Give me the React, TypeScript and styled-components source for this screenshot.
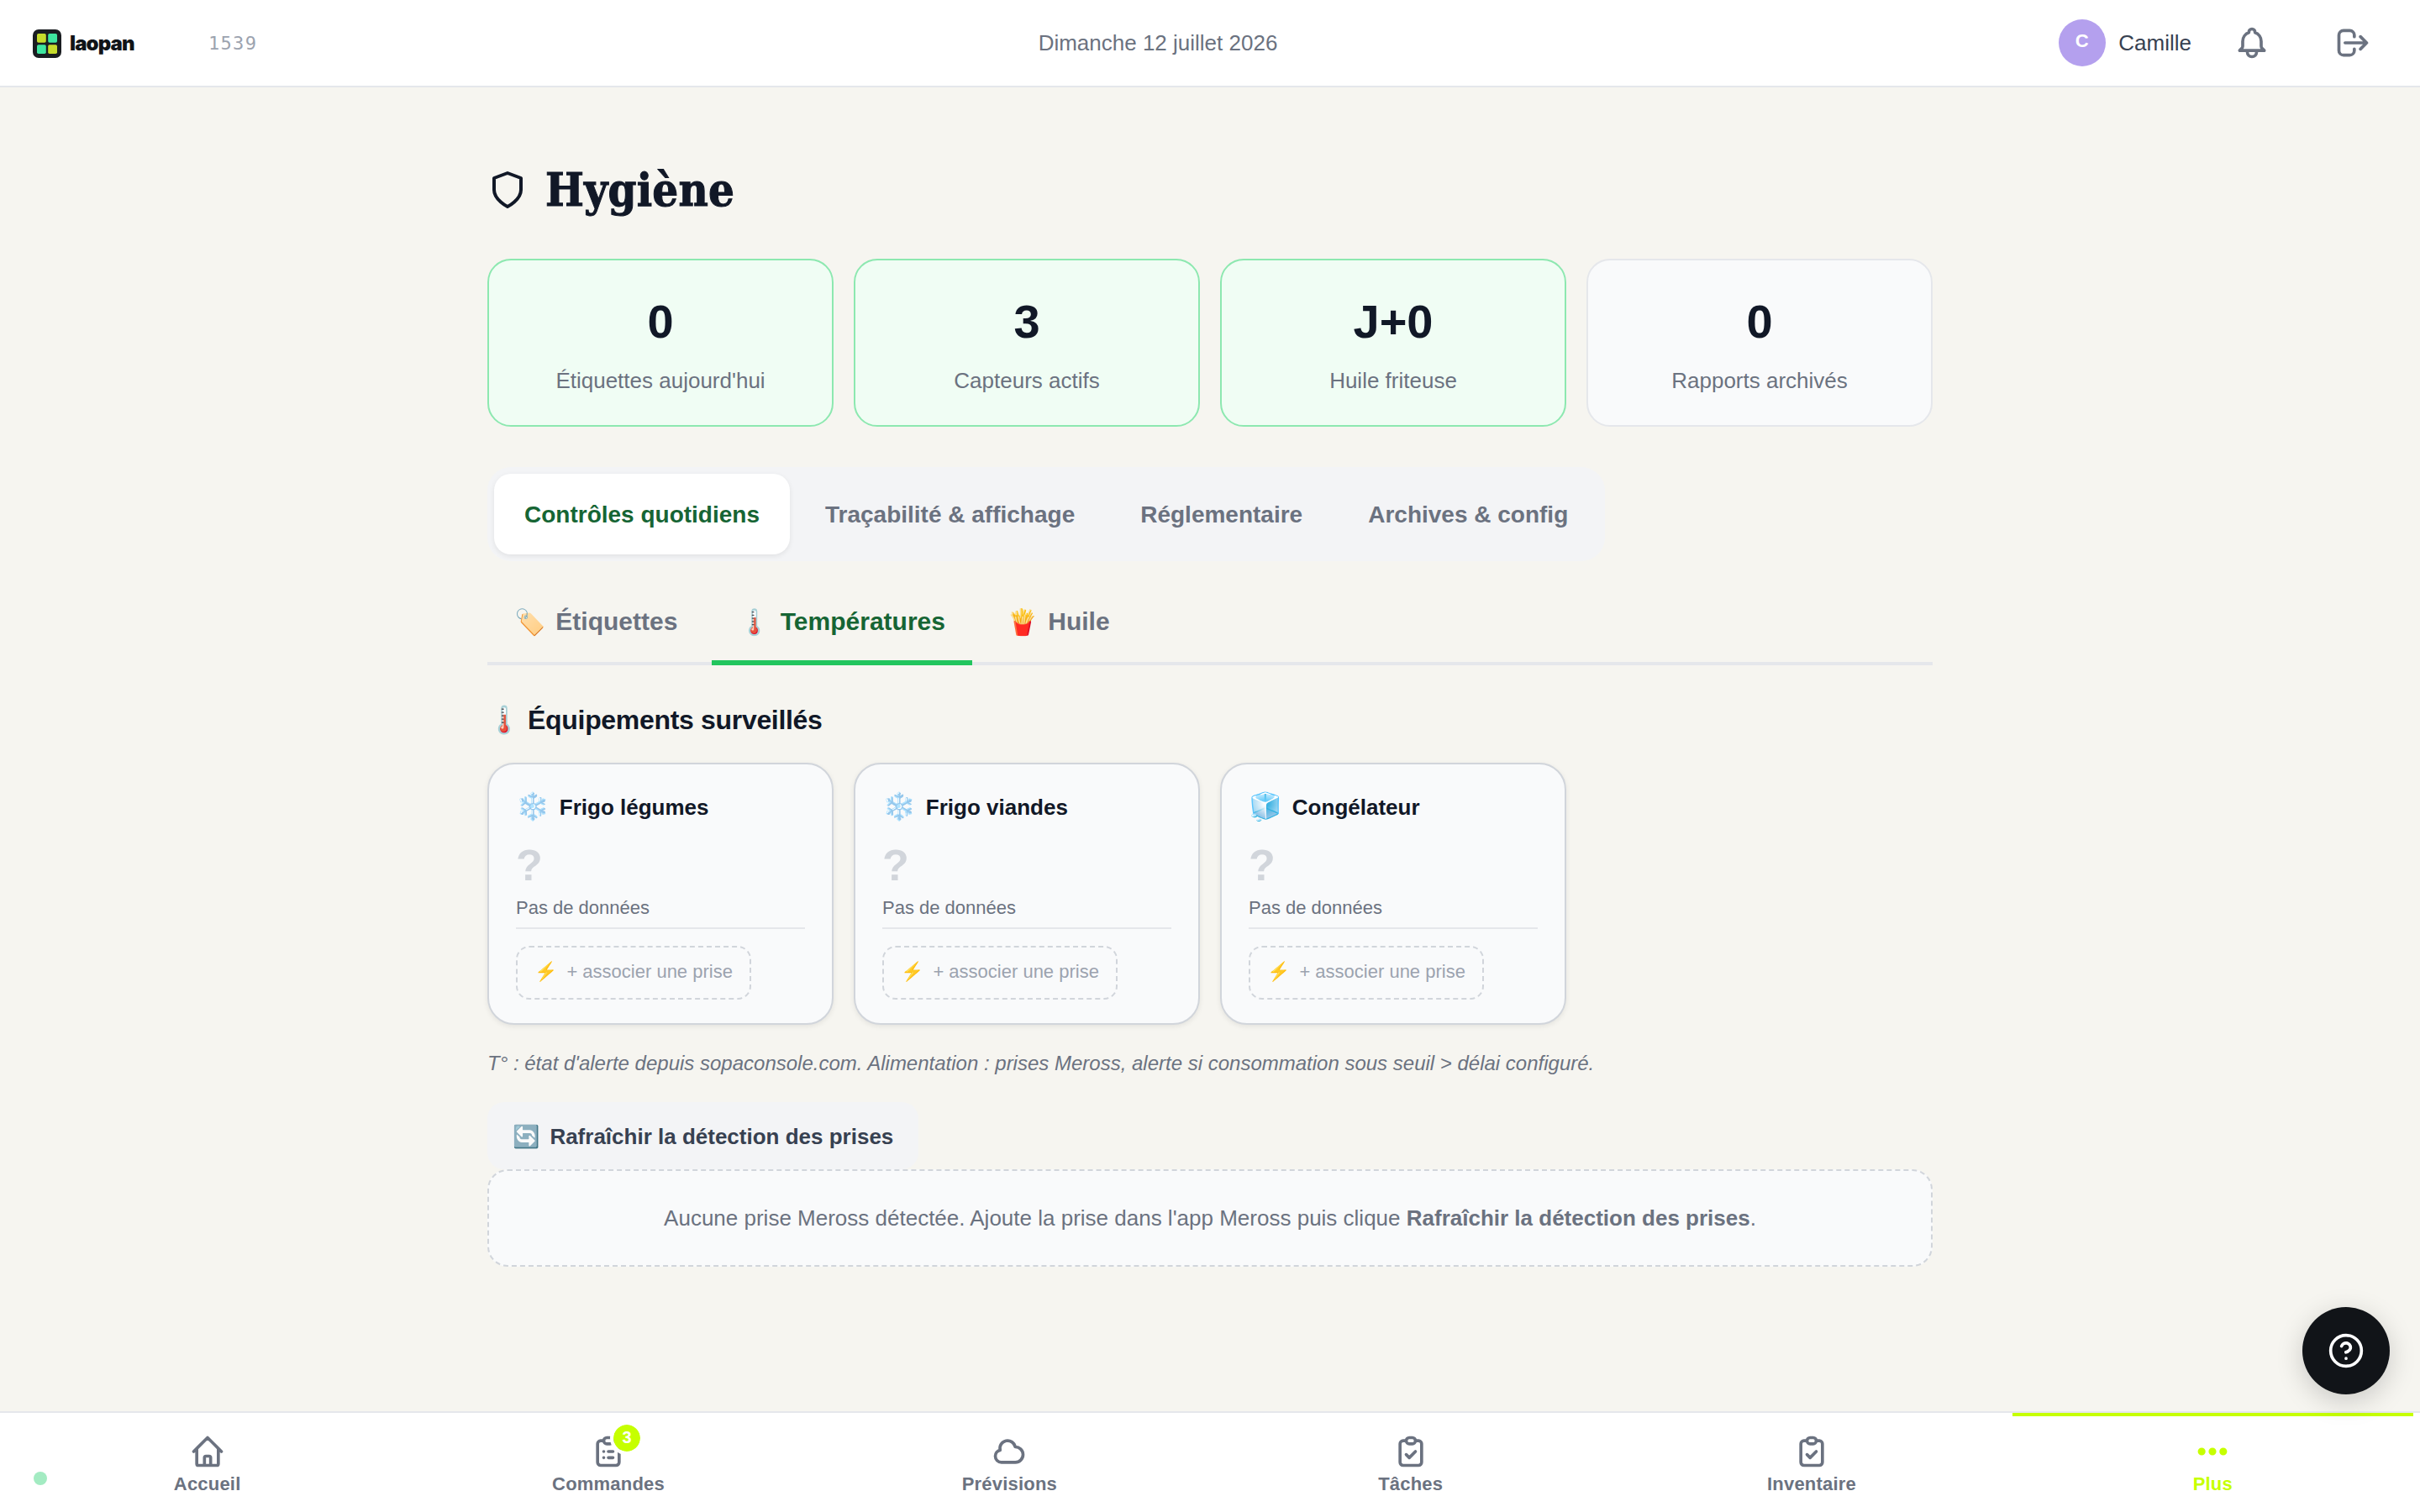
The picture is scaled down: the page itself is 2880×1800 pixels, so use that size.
import React from "react";
import styled, { createGlobalStyle } from "styled-components";

const sans = `"Liberation Sans", Arial, "Noto Color Emoji", sans-serif`;

const GlobalStyle = createGlobalStyle`
  * { box-sizing: border-box; }
  body { margin: 0; background: #f6f5f0; font-family: ${sans}; color: #111827; }
  button { font-family: inherit; border: 0; background: none; padding: 0; margin: 0; }
  svg { display: block; flex: none; }
`;

const Page = styled.div`
  position: relative;
  height: 1800px;
  display: flex;
  flex-direction: column;
  overflow: hidden;
`;

const Header = styled.header`
  height: 104px;
  flex: none;
  display: grid;
  grid-template-columns: 1fr auto 1fr;
  align-items: center;
  background: #fff;
  border-bottom: 2px solid #e5e7eb;
  padding: 0 36px 0 38px;
`;

const Brand = styled.div`
  display: flex;
  align-items: center;
`;

const BrandName = styled.span`
  font-family: Inter, sans-serif;
  font-weight: 900;
  font-size: 24px;
  line-height: 34px;
  letter-spacing: -0.9px;
  color: #111418;
  margin-left: 9px;
  margin-top: 1px;
  width: 165px;
`;

const Code = styled.span`
  font-family: "DejaVu Sans Mono", monospace;
  font-size: 22px;
  letter-spacing: 1.3px;
  color: #9ca3af;
`;

const Today = styled.div`
  font-size: 26px;
  color: #6b7280;
  margin-right: 126px;
`;

const Account = styled.div`
  display: flex;
  align-items: center;
  justify-content: flex-end;
`;

const Avatar = styled.div`
  width: 56px;
  height: 56px;
  border-radius: 50%;
  background: #b4a0ee;
  color: #fff;
  font-weight: 700;
  font-size: 22px;
  line-height: 51px;
  padding-right: 1px;
  text-align: center;
`;

const UserName = styled.span`
  font-size: 26px;
  color: #374151;
  margin-left: 15px;
`;

const IconButton = styled.button<{ $gap: number }>`
  width: 88px;
  height: 88px;
  display: flex;
  align-items: center;
  justify-content: center;
  color: #6b7280;
  margin-left: ${(p) => p.$gap}px;
`;

const Main = styled.main`
  width: 1720px;
  margin: 0 auto;
  padding-top: 80px;
  flex: 1;
  min-height: 0;
  display: flex;
  flex-direction: column;
  align-items: flex-start;
`;

const Title = styled.h1`
  display: flex;
  align-items: center;
  gap: 21px;
  margin: 0;
  height: 84px;
  font-family: "DejaVu Serif Condensed", "DejaVu Serif", serif;
  font-stretch: condensed;
  font-weight: 700;
  font-size: 54px;
  line-height: 86px;
  letter-spacing: 0.2px;
  -webkit-text-stroke: 1px #111827;
  color: #111827;
`;

const Stats = styled.section`
  width: 100%;
  margin-top: 40px;
  display: grid;
  grid-template-columns: repeat(4, 1fr);
  gap: 24px;
`;

const Stat = styled.div<{ $ok: boolean }>`
  height: 200px;
  border: 2px solid ${(p) => (p.$ok ? "#8de8b0" : "#e5e7eb")};
  border-radius: 28px;
  background: ${(p) => (p.$ok ? "#f0fdf4" : "#f9fafb")};
  display: flex;
  flex-direction: column;
  align-items: center;
  padding-top: 39px;
`;

const StatValue = styled.div`
  font-size: 56px;
  line-height: 67px;
  font-weight: 700;
`;

const StatLabel = styled.div`
  font-size: 26px;
  line-height: 39px;
  margin-top: 18px;
  color: #6b7280;
`;

const Groups = styled.nav`
  display: flex;
  gap: 6px;
  padding: 8px;
  margin-top: 48px;
  background: #f3f4f6;
  border-radius: 28px;
`;

const Group = styled.button<{ $active?: boolean }>`
  height: 96px;
  padding: 2px 36px 0;
  border-radius: 20px;
  font-size: 28px;
  font-weight: 700;
  color: ${(p) => (p.$active ? "#166534" : "#6b7280")};
  background: ${(p) => (p.$active ? "#fff" : "transparent")};
  box-shadow: ${(p) => (p.$active ? "0 2px 6px rgba(0,0,0,.08)" : "none")};
`;

const Tabs = styled.nav`
  width: 100%;
  margin-top: 24px;
  height: 100px;
  display: flex;
  gap: 9px;
  border-bottom: 4px solid #e5e7eb;
`;

const Tab = styled.button<{ $active?: boolean }>`
  height: 100px;
  padding: 2px 32px 0;
  display: flex;
  align-items: center;
  gap: 12px;
  font-size: 30px;
  font-weight: 700;
  color: ${(p) => (p.$active ? "#166534" : "#6b7280")};
  border-bottom: 6px solid ${(p) => (p.$active ? "#22c55e" : "transparent")};
`;

const SectionTitle = styled.h2`
  margin: 43px 0 0;
  font-size: 32px;
  line-height: 44px;
  font-weight: 700;
  letter-spacing: -0.32px;
`;

const Equipment = styled.section`
  width: 100%;
  margin-top: 29px;
  display: grid;
  grid-template-columns: repeat(4, 1fr);
  gap: 24px;
`;

const Card = styled.article`
  height: 312px;
  border: 2px solid #d1d5db;
  border-radius: 32px;
  background: #f9fafb;
  box-shadow: 0 2px 6px rgba(0, 0, 0, 0.08);
  padding: 26px 32px 0;
`;

const CardHead = styled.div`
  display: flex;
  align-items: center;
  gap: 12px;
  height: 50px;
  font-weight: 700;
  font-size: 26px;
`;

const CardEmoji = styled.span`
  font-size: 32px;
  line-height: 48px;
  padding-bottom: 2px;
`;

const Reading = styled.div`
  font-weight: 700;
  font-size: 52px;
  line-height: 52px;
  margin-top: 18px;
  color: #d1d5db;
`;

const ReadingNote = styled.div`
  font-size: 22px;
  line-height: 33px;
  margin-top: 8px;
  color: #6b7280;
  border-bottom: 2px solid #e5e7eb;
  height: 42px;
`;

const PlugButton = styled.button`
  height: 64px;
  margin-top: 20px;
  padding: 0 20px 2px;
  border: 2px dashed #d1d5db;
  border-radius: 16px;
  display: flex;
  align-items: center;
  gap: 11px;
  font-size: 22px;
  color: #9ca3af;
`;

const Hint = styled.p`
  margin: 28px 0 0;
  font-size: 24px;
  line-height: 36px;
  font-style: italic;
  color: #6b7280;
`;

const Refresh = styled.button`
  margin-top: 28px;
  height: 80px;
  padding: 2px 30px 0;
  border-radius: 20px;
  background: #f3f4f6;
  display: flex;
  align-items: center;
  gap: 12px;
  font-size: 26px;
  font-weight: 700;
  color: #374151;
`;

const Empty = styled.div`
  width: 100%;
  height: 116px;
  border: 2px dashed #d1d5db;
  border-radius: 24px;
  background: #f9fafb;
  display: flex;
  align-items: center;
  justify-content: center;
  font-size: 26px;
  color: #6b7280;
  white-space: pre;
`;

const BottomNav = styled.nav`
  height: 120px;
  flex: none;
  display: grid;
  grid-template-columns: repeat(6, 1fr);
  background: #fff;
  border-top: 2px solid #e5e7eb;
  padding: 0 8px;
`;

const NavItem = styled.a<{ $active?: boolean }>`
  display: flex;
  flex-direction: column;
  align-items: center;
  border-top: 4px solid ${(p) => (p.$active ? "#c6ff00" : "transparent")};
  padding-top: 20px;
  font-size: 22px;
  line-height: 33px;
  letter-spacing: 0.2px;
  font-weight: 700;
  color: ${(p) => (p.$active ? "#c6ff00" : "#6b7280")};
`;

const NavIcon = styled.span`
  position: relative;
  height: 44px;
`;

const Badge = styled.span`
  position: absolute;
  top: -14px;
  left: 24px;
  width: 40px;
  height: 40px;
  border: 4px solid #fff;
  border-radius: 50%;
  background: #c6ff00;
  background-clip: padding-box;
  color: #fff;
  font-size: 20px;
  letter-spacing: 0;
  line-height: 31px;
  text-align: center;
`;

const Status = styled.span`
  position: absolute;
  left: 40px;
  bottom: 32px;
  width: 16px;
  height: 16px;
  border-radius: 50%;
  background: #a3ebc2;
`;

const Help = styled.button`
  position: absolute;
  right: 36px;
  bottom: 140px;
  width: 104px;
  height: 104px;
  border-radius: 50%;
  background: #111418;
  color: #fff;
  display: flex;
  align-items: center;
  justify-content: center;
  box-shadow: 0 8px 32px rgba(0, 0, 0, 0.18);
`;

const LogoMark = styled.svg`
  margin-top: 2px;
`;

const Logo = () => (
  <LogoMark width="36" height="36" viewBox="0 0 36 36">
    <rect x="1" y="1" width="34" height="34" rx="7" fill="#1a1d21" />
    <rect x="6" y="6" width="10.8" height="10.8" rx="1.8" fill="#c6dc2c" />
    <rect x="19.2" y="6" width="10.8" height="10.8" rx="1.8" fill="#3ee6a0" />
    <rect x="6" y="19.2" width="10.8" height="10.8" rx="1.8" fill="#3ee6a0" />
    <rect x="19.2" y="19.2" width="10.8" height="10.8" rx="1.8" fill="#c6dc2c" />
  </LogoMark>
);

const clipboard =
  "M9 5H7a2 2 0 00-2 2v12a2 2 0 002 2h10a2 2 0 002-2V7a2 2 0 00-2-2h-2M9 5a2 2 0 002 2h2a2 2 0 002-2M9 5a2 2 0 012-2h2a2 2 0 012 2";

const paths = {
  home: "M3 12l2-2m0 0l7-7 7 7M5 10v10a1 1 0 001 1h3m10-11l2 2m-2-2v10a1 1 0 01-1 1h-3m-6 0a1 1 0 001-1v-4a1 1 0 011-1h2a1 1 0 011 1v4a1 1 0 001 1m-6 0h6",
  list: clipboard + "m-3 7h3m-3 4h3m-6-4h.01M9 16h.01",
  check: clipboard + "m-6 9l2 2 4-4",
  cloud: "M3 15a4 4 0 004 4h9a5 5 0 10-.1-9.999 5.002 5.002 0 10-9.78 2.096A4.001 4.001 0 003 15z",
  dots: "M5 12h.01M12 12h.01M19 12h.01M6 12a1 1 0 11-2 0 1 1 0 012 0zm7 0a1 1 0 11-2 0 1 1 0 012 0zm7 0a1 1 0 11-2 0 1 1 0 012 0z",
  bell: "M15 17h5l-1.405-1.405A2.032 2.032 0 0118 14.158V11a6.002 6.002 0 00-4-5.659V5a2 2 0 10-4 0v.341C7.67 6.165 6 8.388 6 11v3.159c0 .538-.214 1.055-.595 1.436L4 17h5m6 0v1a3 3 0 11-6 0v-1m6 0H9",
  logout: "M17 16l4-4m0 0l-4-4m4 4H7m6 4v1a3 3 0 01-3 3H6a3 3 0 01-3-3V7a3 3 0 013-3h4a3 3 0 013 3v1",
  shield: "M12 22s8-4 8-10V5l-8-3-8 3v7c0 6 8 10 8 10z",
  help: "M12 2a10 10 0 100 20 10 10 0 000-20zM9.09 9a3 3 0 015.83 1c0 2-3 3-3 3M12 17h.01",
};

type IconName = keyof typeof paths;

const Icon = ({ name, size = 44, stroke = 2 }: { name: IconName; size?: number; stroke?: number }) => (
  <svg
    width={size}
    height={size}
    viewBox="0 0 24 24"
    fill="none"
    stroke="currentColor"
    strokeWidth={stroke}
    strokeLinecap="round"
    strokeLinejoin="round"
  >
    <path d={paths[name]} />
  </svg>
);

const stats = [
  { value: "0", label: "Étiquettes aujourd'hui", ok: true },
  { value: "3", label: "Capteurs actifs", ok: true },
  { value: "J+0", label: "Huile friteuse", ok: true },
  { value: "0", label: "Rapports archivés", ok: false },
];

const equipment = [
  { emoji: "❄️", name: "Frigo légumes" },
  { emoji: "❄️", name: "Frigo viandes" },
  { emoji: "🧊", name: "Congélateur" },
];

const navItems: { label: string; icon: IconName; badge?: number; active?: boolean }[] = [
  { label: "Accueil", icon: "home" },
  { label: "Commandes", icon: "list", badge: 3 },
  { label: "Prévisions", icon: "cloud" },
  { label: "Tâches", icon: "check" },
  { label: "Inventaire", icon: "check" },
  { label: "Plus", icon: "dots", active: true },
];

export default function App() {
  return (
    <Page>
      <GlobalStyle />
      <Header>
        <Brand>
          <Logo />
          <BrandName>laopan</BrandName>
          <Code>1539</Code>
        </Brand>
        <Today>Dimanche 12 juillet 2026</Today>
        <Account>
          <Avatar>C</Avatar>
          <UserName>Camille</UserName>
          <IconButton $gap={28}><Icon name="bell" /></IconButton>
          <IconButton $gap={32}><Icon name="logout" /></IconButton>
        </Account>
      </Header>
      <Main>
        <Title><Icon name="shield" size={48} stroke={2} />Hygiène</Title>
        <Stats>
          {stats.map((s) => (
            <Stat key={s.label} $ok={s.ok}>
              <StatValue>{s.value}</StatValue>
              <StatLabel>{s.label}</StatLabel>
            </Stat>
          ))}
        </Stats>
        <Groups>
          <Group $active>Contrôles quotidiens</Group>
          <Group>Traçabilité &amp; affichage</Group>
          <Group>Réglementaire</Group>
          <Group>Archives &amp; config</Group>
        </Groups>
        <Tabs>
          <Tab><span>🏷️</span>Étiquettes</Tab>
          <Tab $active><span>🌡️</span>Températures</Tab>
          <Tab><span>🍟</span>Huile</Tab>
        </Tabs>
        <SectionTitle>🌡️ Équipements surveillés</SectionTitle>
        <Equipment>
          {equipment.map((e) => (
            <Card key={e.name}>
              <CardHead><CardEmoji>{e.emoji}</CardEmoji>{e.name}</CardHead>
              <Reading>?</Reading>
              <ReadingNote>Pas de données</ReadingNote>
              <PlugButton><span>⚡</span>+ associer une prise</PlugButton>
            </Card>
          ))}
        </Equipment>
        <Hint>T° : état d'alerte depuis sopaconsole.com. Alimentation : prises Meross, alerte si consommation sous seuil &gt; délai configuré.</Hint>
        <Refresh><span>🔄</span>Rafraîchir la détection des prises</Refresh>
        <Empty>Aucune prise Meross détectée. Ajoute la prise dans l'app Meross puis clique <b>Rafraîchir la détection des prises</b>.</Empty>
      </Main>
      <BottomNav>
        {navItems.map(({ label, icon, badge, active }) => (
          <NavItem key={label} $active={active}>
            <NavIcon>
              <Icon name={icon} stroke={active ? 3 : 2} />
              {badge && <Badge>{badge}</Badge>}
            </NavIcon>
            {label}
          </NavItem>
        ))}
      </BottomNav>
      <Status />
      <Help><Icon name="help" /></Help>
    </Page>
  );
}
